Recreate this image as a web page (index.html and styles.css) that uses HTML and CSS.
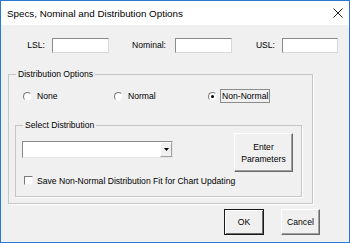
FILE: index.html
```html
<!DOCTYPE html>
<html>
<head>
<meta charset="utf-8">
<link rel="stylesheet" href="styles.css">
</head>
<body>
<div class="window">
  <div class="titlebar">
    <span class="title">Specs, Nominal and Distribution Options</span>
    <svg class="close" width="10" height="10" viewBox="0 0 10 10"><path d="M0.5 0.5 L9.5 9.5 M9.5 0.5 L0.5 9.5" stroke="#222" stroke-width="1" fill="none"/></svg>
  </div>
  <div class="body">
    <div class="specs">
      <label class="lbl l-lsl">LSL:</label><div class="textbox tb1"></div>
      <label class="lbl l-nom">Nominal:</label><div class="textbox tb2"></div>
      <label class="lbl l-usl">USL:</label><div class="textbox tb3"></div>
    </div>
    <fieldset class="group outer">
      <legend>Distribution Options</legend>
      <div class="radios">
        <div class="opt o1"><span class="radio"></span><span class="otext">None</span></div>
        <div class="opt o2"><span class="radio"></span><span class="otext">Normal</span></div>
        <div class="opt o3"><span class="radio on"></span><span class="otext focus">Non-Normal</span></div>
      </div>
      <fieldset class="group inner">
        <legend>Select Distribution</legend>
        <div class="selrow">
          <div class="combo"><div class="drop"><svg width="5" height="3" viewBox="0 0 5 3"><path d="M0 0 H5 L2.5 3 Z" fill="#000"/></svg></div></div>
          <button class="btn b3d enter">Enter<br>Parameters</button>
        </div>
        <div class="chkrow"><span class="check"></span><span class="ctext">Save Non-Normal Distribution Fit for Chart Updating</span></div>
      </fieldset>
    </fieldset>
    <div class="actions">
      <button class="btn ok">OK</button>
      <button class="btn b3d cancel">Cancel</button>
    </div>
  </div>
</div>
</body>
</html>
```
FILE: styles.css
```css
html, body { margin: 0; padding: 0; }
body { background: #f0f0f0; font-family: "Liberation Sans", Arial, sans-serif; font-size: 8.6px; color: #000; }
.window { width: 350px; height: 243px; box-sizing: border-box; border: 1px solid #2b78d0; display: flex; flex-direction: column; background: #f0f0f0; overflow: hidden; }
.titlebar { height: 24px; flex: none; background: #fff; display: flex; align-items: center; padding-left: 6px; }
.title { font-size: 9.8px; color: #000; }
.close { margin-left: auto; margin-right: 6px; }
.body { flex: 1; display: flex; flex-direction: column; }
.specs { display: flex; align-items: center; margin-top: 13px; height: 15px; }
.lbl { text-align: right; line-height: 15px; }
.l-lsl { width: 44px; margin-right: 7px; }
.l-nom { width: 57px; margin-right: 9px; }
.l-usl { width: 43px; margin-right: 7px; }
.textbox { width: 57px; height: 15px; box-sizing: border-box; background: #fff; border: 1px solid; border-color: #8a8a8a #d8d8d8 #d8d8d8 #8a8a8a; }
.tb3 { width: 56px; }
.group { border: 1px solid #c6c6c6; box-shadow: 1px 1px 0 #fff; margin: 0; padding: 0; min-width: 0; }
.group legend { padding: 0 2px; margin-left: 7px; line-height: 11px; }
.outer { margin-top: 16px; margin-left: 7px; width: 305px; box-sizing: border-box; padding-bottom: 6px; }
.radios { display: flex; height: 14px; margin-top: 9px; padding-left: 14px; align-items: center; }
.opt { display: flex; align-items: center; }
.o1 { width: 91px; }
.o2 { width: 94px; }
.radio { width: 9px; height: 9px; box-sizing: border-box; border-radius: 50%; border: 1px solid; border-color: #7a7a7a #f4f4f4 #f4f4f4 #7a7a7a; background: #fff; margin-right: 3px; display: flex; align-items: center; justify-content: center; }
.radio.on::after { content: ""; width: 3px; height: 3px; border-radius: 50%; background: #000; }
.otext { line-height: 12px; padding: 0 1px; border: 1px solid transparent; }
.otext.focus { border-color: #8c8c8c; }
.inner { margin-top: 17px; margin-left: 6px; width: 287px; box-sizing: border-box; padding-bottom: 10px; }
.selrow { display: flex; margin-top: 2px; padding-left: 6px; padding-right: 8px; align-items: flex-start; }
.combo { width: 151px; height: 17px; box-sizing: border-box; margin-top: 8px; background: #fff; border: 1px solid; border-color: #8a8a8a #e6e6e6 #e6e6e6 #8a8a8a; display: flex; justify-content: flex-end; }
.drop { width: 12px; height: 15px; box-sizing: border-box; background: #f0f0f0; border: 1px solid; border-color: #fff #a0a0a0 #a0a0a0 #fff; display: flex; align-items: center; justify-content: center; }
.btn { font-family: "Liberation Sans", Arial, sans-serif; font-size: 8.6px; color: #000; background: #f0f0f0; box-sizing: border-box; padding: 0; margin: 0; line-height: 12px; text-align: center; }
.b3d { border: 1px solid; border-color: #fff #6a6a6a #6a6a6a #fff; box-shadow: inset -1px -1px 0 #a0a0a0; }
.enter { margin-left: auto; width: 59px; height: 39px; }
.chkrow { display: flex; align-items: center; margin-top: 3px; height: 11px; padding-left: 8px; }
.check { width: 9px; height: 9px; box-sizing: border-box; background: #fff; border: 1px solid; border-color: #7a7a7a #f4f4f4 #f4f4f4 #7a7a7a; margin-right: 4px; }
.actions { display: flex; justify-content: flex-end; margin-top: 5px; padding-right: 29px; gap: 17px; }
.ok { width: 40px; height: 26px; border: 1px solid #1a1a1a; box-shadow: inset 1px 1px 0 #fff, inset -1px -1px 0 #6a6a6a; }
.cancel { width: 39px; height: 26px; }
```
